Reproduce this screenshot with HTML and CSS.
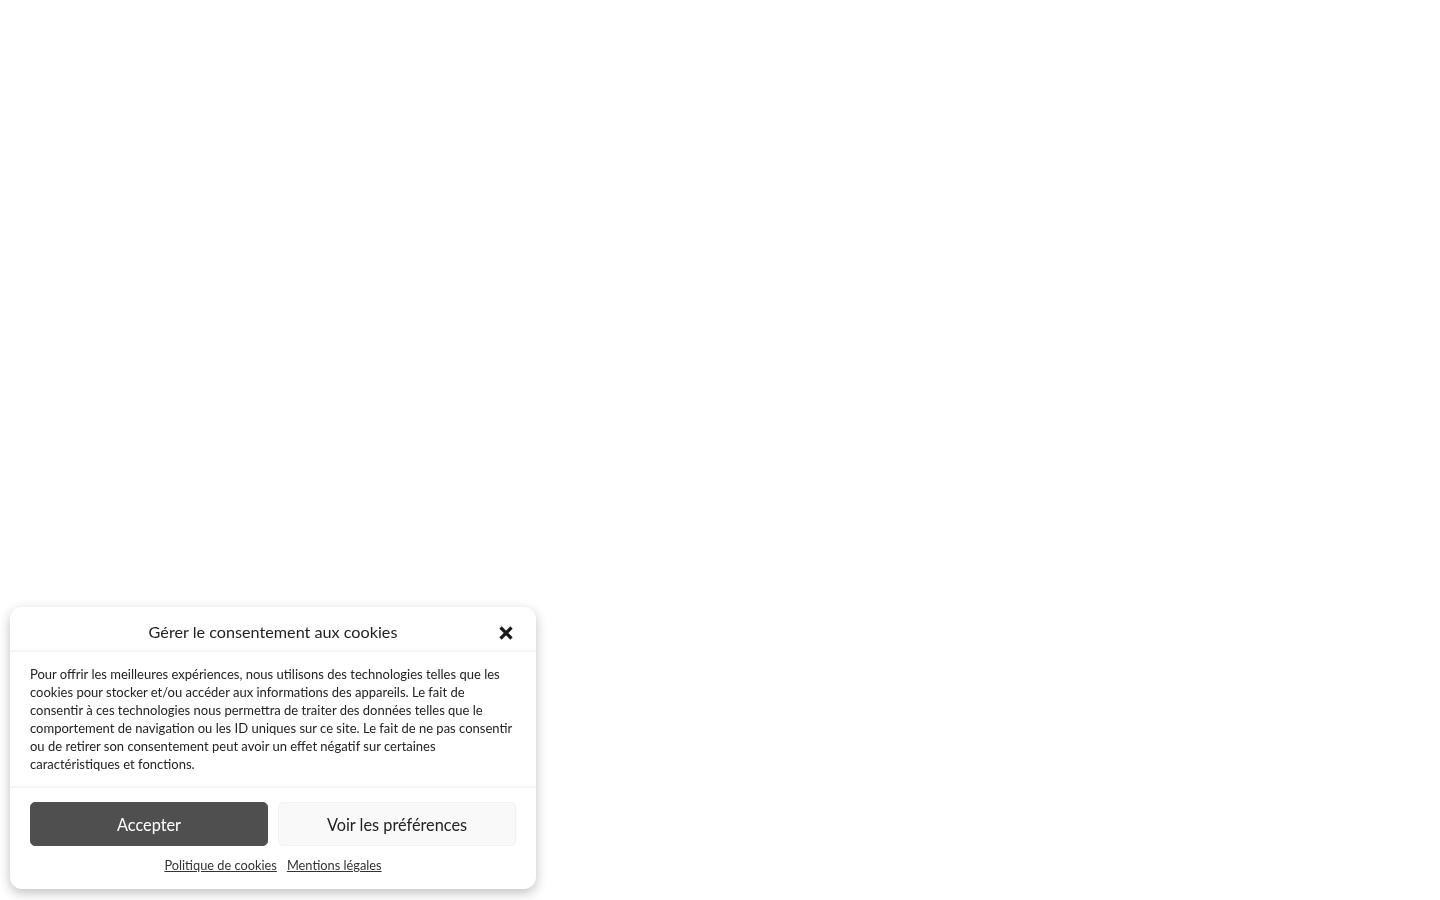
FILE: index.html
```html
<!DOCTYPE html>
<html lang="fr">
<head>
<meta charset="utf-8">
<title>Cookies</title>
<link rel="stylesheet" href="styles.css">
</head>
<body>
<div class="cookie-banner">
  <div class="cb-header">
    <div class="cb-title">Gérer le consentement aux cookies</div>
    <button class="cb-close" aria-label="Fermer">
      <svg width="16" height="16" viewBox="0 0 16 16"><path d="M2.5 2.5 L13.5 13.5 M13.5 2.5 L2.5 13.5" stroke="#1a1a1a" stroke-width="3.2" stroke-linecap="butt"/></svg>
    </button>
  </div>
  <div class="cb-body">
    Pour offrir les meilleures expériences, nous utilisons des technologies telles que les cookies pour stocker et/ou accéder aux informations des appareils. Le fait de consentir à ces technologies nous permettra de traiter des données telles que le comportement de navigation ou les ID uniques sur ce site. Le fait de ne pas consentir ou de retirer son consentement peut avoir un effet négatif sur certaines caractéristiques et fonctions.
  </div>
  <div class="cb-buttons">
    <button class="cb-btn cb-accept">Accepter</button>
    <button class="cb-btn cb-prefs">Voir les préférences</button>
  </div>
  <div class="cb-links">
    <a href="#">Politique de cookies</a>
    <a href="#">Mentions légales</a>
  </div>
</div>
</body>
</html>
```

FILE: styles.css
```css
html, body {
  margin: 0;
  padding: 0;
  background: #ffffff;
  font-family: "Lato", "Open Sans", sans-serif;
  color: #222222;
}

.cookie-banner {
  position: fixed;
  left: 10px;
  bottom: 11px;
  width: 526px;
  background: #ffffff;
  border-radius: 12px;
  box-shadow: 0 4px 12px rgba(0, 0, 0, 0.25);
  box-sizing: border-box;
}

.cb-header {
  display: flex;
  align-items: center;
  justify-content: center;
  box-sizing: border-box;
  height: 45px;
  padding: 6px 20px 0 20px;
  border-bottom: 2px solid #f5f5f5;
  position: relative;
}

.cb-title {
  font-size: 16.2px;
  color: #222222;
}

.cb-close {
  position: absolute;
  right: 22px;
  top: 18px;
  border: none;
  background: none;
  padding: 0;
  width: 16px;
  height: 16px;
  display: flex;
  cursor: pointer;
}

.cb-body {
  padding: 13px 20px 13px 20px;
  font-size: 13px;
  line-height: 18px;
  color: #222222;
  border-bottom: 2px solid #f5f5f5;
}

.cb-buttons {
  display: grid;
  grid-template-columns: 1fr 1fr;
  gap: 10px;
  padding: 14px 20px 0 20px;
}

.cb-btn {
  height: 44px;
  border-radius: 5px;
  font-family: inherit;
  font-size: 16.3px;
  cursor: pointer;
}

.cb-accept {
  background: #4f4f4f;
  color: #ffffff;
  border: 1px solid #4f4f4f;
}

.cb-prefs {
  background: #f9f9f9;
  color: #222222;
  border: 1px solid #f2f2f2;
}

.cb-links {
  display: flex;
  justify-content: center;
  gap: 10px;
  padding: 11px 20px 16px 20px;
  font-size: 12.8px;
  line-height: 16px;
}

.cb-links a {
  color: #333333;
  text-decoration: underline;
}
```
